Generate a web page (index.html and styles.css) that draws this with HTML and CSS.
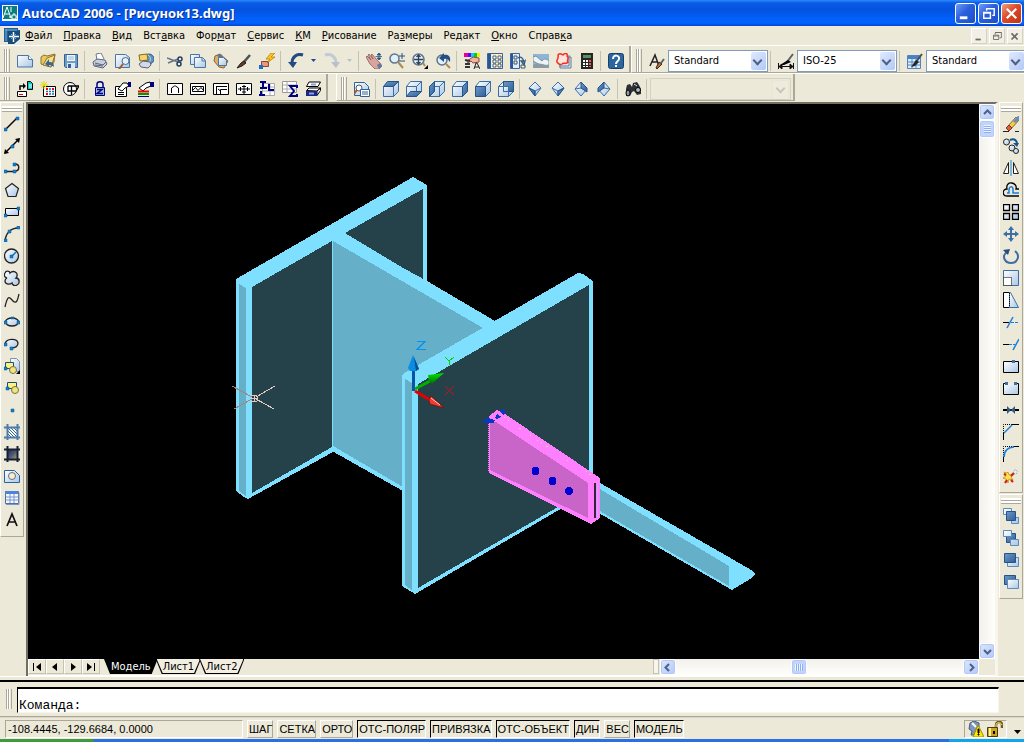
FILE: index.html
```html
<!DOCTYPE html>
<html lang="ru">
<head>
<meta charset="utf-8">
<title>AutoCAD 2006 - [Рисунок13.dwg]</title>
<link rel="stylesheet" href="styles.css">
</head>
<body>
<svg class="defs" aria-hidden="true">
  <defs>
    <linearGradient id="pale" x1="0" y1="0" x2="1" y2="1"><stop offset="0" stop-color="#fff"/><stop offset="1" stop-color="#a9c6e6"/></linearGradient>
    <linearGradient id="steel" x1="0" y1="0" x2="1" y2="1"><stop offset="0" stop-color="#6f9ac8"/><stop offset="1" stop-color="#2f5f98"/></linearGradient>
    <linearGradient id="glow" x1="0" y1="0" x2="1" y2="1"><stop offset="0" stop-color="#1c2848"/><stop offset=".5" stop-color="#4c5878"/><stop offset="1" stop-color="#c0b050"/></linearGradient>
    <linearGradient id="greenArrow" x1="0" y1="0" x2="0" y2="1"><stop offset="0" stop-color="#00e800"/><stop offset="1" stop-color="#006a00"/></linearGradient>
  </defs>
</svg>

<header class="titlebar">
  <svg class="app-icon" viewBox="0 0 16 16"><path fill="#fff" d="M0 0h16v16H0z"/><path fill="#0b7f80" d="M1 1h14v13H1z"/><path d="M1 13 5 2l4 11M3 9h4M9 2v5M7 12h8M12 8v8" fill="none" stroke="#fff"/><path d="M10 10h4v4h-4z" fill="#0b7f80" stroke="#fff"/></svg>
  <h1 class="title">AutoCAD 2006 - [Рисунок13.dwg]</h1>
  <div class="window-buttons">
    <button class="win" aria-label="Свернуть"><svg viewBox="0 0 20 20"><path fill="#fff" d="M4 13h8v3H4z"/></svg></button>
    <button class="win" aria-label="Развернуть"><svg viewBox="0 0 20 20"><path d="M8 7V5h8v7h-2M8 5h8" fill="none" stroke="#fff" stroke-width="1.500"/><path d="M5 9h7v6H5zM5 9.500h7" fill="none" stroke="#fff" stroke-width="1.500"/></svg></button>
    <button class="win win-close" aria-label="Закрыть"><svg viewBox="0 0 20 20"><path d="m5 5 10 10M15 5 5 15" stroke="#fff" stroke-width="2.400"/></svg></button>
  </div>
</header>

<nav class="menubar">
  <svg class="doc-icon" viewBox="0 0 16 16"><path fill="#1f5f98" d="M0 0h14v2h2v14H4v-2H0z"/><path d="M1 2h12M2 1v12" stroke="#7db0d8"/><path fill="#174b78" d="M4 3h12v13H4z"/><path d="M9.500 4v10M5 8.500h10" stroke="#fff" stroke-width="1.500"/><path d="m7 6 5 5M12 6l-5 5" stroke="#6fa8d4"/><path d="m10 16 6-5v5z" fill="#e4eef6"/></svg>
  <button><u>Ф</u>айл</button><button><u>П</u>равка</button><button><u>В</u>ид</button><button>Вст<u>а</u>вка</button><button>Фор<u>м</u>ат</button><button><u>С</u>ервис</button><button><u>К</u>М</button><button><u>Р</u>исование</button><button>Ра<u>з</u>меры</button><button>Ре<u>д</u>акт</button><button><u>О</u>кно</button><button>Справ<u>к</u>а</button>
  <div class="doc-buttons">
    <button aria-label="Свернуть рисунок"><svg viewBox="0 0 16 16"><path d="M4 11h6v2H4z" fill="#6b6a63"/></svg></button>
    <button aria-label="Восстановить рисунок"><svg viewBox="0 0 16 16"><path d="M6 6V4h7v6h-2M6 4h7M4 7h6v5H4zM4 8h6" fill="none" stroke="#6b6a63"/></svg></button>
    <button aria-label="Закрыть рисунок"><svg viewBox="0 0 16 16"><path d="m4 5 7 7M11 5l-7 7" stroke="#6b6a63" stroke-width="2"/></svg></button>
  </div>
</nav>

<div class="toolbar-row">
  <div class="toolbar">
    <i class="grip"></i>
    <button aria-label="Новый"><svg viewBox="0 0 16 16"><path d="M.5 2.500h11l4 4v7.500H.5z" fill="url(#pale)" stroke="#4a76a5"/><path d="M11.500 2.500v4h4" fill="#fff" stroke="#4a76a5"/></svg></button>
    <button aria-label="Открыть"><svg viewBox="0 0 16 16"><path d="m1 4 3-2 3 1 8-2-1 8-3 5L1 11z" fill="#e8c860" stroke="#92742c"/><path d="m3 12 4-7 8-3-4 12z" fill="#f6df8c" stroke="#92742c"/><path d="M14 14c0-4-2-5-5-5V6l-4 5 4 3v-2c2 0 4 1 5 2z" fill="#3b6694"/></svg></button>
    <button aria-label="Сохранить"><svg viewBox="0 0 16 16"><path d="M1.500 1.500h13v13h-12l-1-1z" fill="#6f9bc8" stroke="#355f93"/><path fill="#eef5fb" d="M4 2h8v6H4z"/><path d="M5 4h6M5 6h6" stroke="#9bb8d6"/><path fill="#dce8f4" d="M4 10h8v5H4z"/><path fill="#355f93" d="M5 11h3v4H5z"/></svg></button>
    <i class="sep"></i>
    <button aria-label="Печать"><svg viewBox="0 0 16 16"><path d="m5 7-1-6 5-1 3 6" fill="#fff" stroke="#6c7894"/><path d="m1 9 4-3 8 1 2 4-4 4-9-2z" fill="#c9cfdc" stroke="#58647e"/><path d="m3 10 8 2 3-3M3 12l8 1" fill="none" stroke="#58647e"/></svg></button>
    <button aria-label="Просмотр"><svg viewBox="0 0 16 16"><path d="M.5 1.500h10l4 3v10H.5z" fill="url(#pale)" stroke="#4a76a5"/><circle cx="10.500" cy="8" r="3.500" fill="#e2f1fc" stroke="#536a86"/><path d="m8 11-4 5" stroke="#a65b24" stroke-width="2"/></svg></button>
    <button aria-label="Публикация"><svg viewBox="0 0 16 16"><circle cx="11" cy="6" r="5" fill="#5b91c8" stroke="#315e90"/><path d="M10 2c3 2 3 5 1 8" stroke="#d4e9c4" fill="none"/><path d="m1 2 8-1 1 6-8 1z" fill="#f4d567" stroke="#866b22"/><path d="m1 11 4-3 7 1 1 3-3 3-7-1z" fill="#d4d9e4" stroke="#58647e"/></svg></button>
    <i class="sep"></i>
    <button aria-label="Вырезать"><svg viewBox="0 0 16 16"><path d="m0 5 11 4M1 10l10-4" stroke="#65758c" stroke-width="1.500"/><circle cx="13" cy="6" r="2" fill="none" stroke="#253c5f" stroke-width="1.500"/><circle cx="12" cy="11" r="2" fill="none" stroke="#253c5f" stroke-width="1.500"/></svg></button>
    <button aria-label="Копировать"><svg viewBox="0 0 16 16"><path d="M.5 1.500h9v10h-9z" fill="url(#pale)" stroke="#4a76a5"/><path d="M4.500 4.500h8l3 3v7h-11z" fill="url(#pale)" stroke="#4a76a5"/><path d="M12 5v3h3" fill="none" stroke="#4a76a5"/></svg></button>
    <button aria-label="Вставить"><svg viewBox="0 0 16 16"><path d="m2 3 5-2 8 7-4 7-5-1-5-6z" fill="#d9b065" stroke="#8a6632"/><path d="m4 2 4-1 2 3-4 1z" fill="#68748c"/><path d="M5.500 4.500h5l3 3v5h-8z" fill="url(#pale)" stroke="#4a76a5"/></svg></button>
    <button aria-label="Копирование свойств"><svg viewBox="0 0 16 16"><path d="m14 2-7 8" stroke="#4c5359" stroke-width="2.500"/><path d="m8 8 2 2-4 3-5 2 4-5z" fill="#653b23" stroke="#24201d"/></svg></button>
    <button aria-label="Редактор блоков"><svg viewBox="0 0 16 16"><path d="M2.500 8.500h7v5h-7z" fill="#e8967e" stroke="#8c4438"/><path d="m12 0-5 6h4l-3 4 8-6h-4l4-4z" fill="#ffc51c" stroke="#ad7a00" stroke-width=".7"/><path fill="#1273c4" d="M0 12h4v4H0z"/></svg></button>
    <i class="sep"></i>
    <button aria-label="Отменить"><svg viewBox="0 0 16 16"><path d="M15 2C9 0 4 4 4 10" fill="none" stroke="#234b82" stroke-width="3"/><path d="M0 9h9l-4 6z" fill="#234b82"/></svg></button>
    <button class="drop" aria-label="Список отмены"><svg viewBox="0 0 5 3"><path d="M0 0h5L2.500 3z" fill="#164a94"/></svg></button>
    <button aria-label="Повторить"><svg viewBox="0 0 16 16"><path d="M1 2c6-2 11 2 11 8" fill="none" stroke="#c3cad3" stroke-width="3"/><path d="M7 9h9l-4 6z" fill="#b7c0cb"/></svg></button>
    <button class="drop" aria-label="Список повтора"><svg viewBox="0 0 5 3"><path d="M0 0h5L2.500 3z" fill="#b7c0cb"/></svg></button>
    <i class="sep"></i>
    <button aria-label="Панорамирование"><svg viewBox="0 0 16 16"><path d="m0 4 1-1 4 4-3-5 1-1 4 5-2-4 1-1 5 6 3 3 2 3-3 3H9L4 11z" fill="#d9a49c" stroke="#8d5c57" stroke-width=".8"/><path d="m11 12 3-2 2 3-3 3z" fill="#5d7ba4"/><path d="M13 0v7M9.500 3.500h7M13 0l-2 2h4zM13 7l-2-2h4z" stroke="#2d5787" fill="#2d5787" stroke-width=".8"/></svg></button>
    <button aria-label="Зумирование"><svg viewBox="0 0 16 16"><circle cx="5.500" cy="5.500" r="4.500" fill="#e0eff8" stroke="#60748b" stroke-width="1.500"/><path d="m9 9 5 6" stroke="#b08a54" stroke-width="2"/><path d="M13 0v6M10 3h6M10 8h6" stroke="#2b5078"/></svg></button>
    <button aria-label="Показать границы"><svg viewBox="0 0 16 16"><circle cx="6.500" cy="6.500" r="5.500" fill="#eaf4fa" stroke="#60748b" stroke-width="1.500"/><path d="M2 6.500h9M6.500 2v9M4.500 4l2-2 2 2M4.500 9l2 2 2-2" fill="none" stroke="#2b4059" stroke-width="1.300"/><path d="m11 10 2 3" stroke="#b08a54" stroke-width="2"/><path d="M16 12v4h-4z"/></svg></button>
    <button aria-label="Предыдущий вид"><svg viewBox="0 0 16 16"><circle cx="7" cy="7" r="5" fill="#e0eff8" stroke="#60748b" stroke-width="1.500"/><path d="m11 11 4 4" stroke="#b08a54" stroke-width="2"/><path d="M15 9c1-6-2-8-6-7V0L4 5l5 4V6c3-1 4 0 6 3z" fill="#244f83"/></svg></button>
    <i class="sep"></i>
    <button aria-label="Свойства"><svg viewBox="0 0 16 16"><path fill="#e5009a" d="M0 0h4v4H0z"/><path fill="#6700ff" d="M4 0h3v4H4z"/><path fill="#00d6e7" d="M7 0h3v4H7z"/><path fill="#00c93d" d="M10 0h3v4h-3z"/><path fill="#f5f000" d="M13 0h3v4h-3z"/><path d="m3 8 6-4 6 1v4l-6 1-2-2-3 2z" fill="#eeb4a0" stroke="#8e493b"/><path d="m1 7 5 1M1 11h5M1 14h5" stroke="#30333a" stroke-width="2"/><path d="m10 16 2-6h1l3 6M11 14h4" fill="none" stroke="#222"/></svg></button>
    <button aria-label="Центр управления"><svg viewBox="0 0 16 16"><path d="M.5.500h15v15H.5z" fill="#f5f1cf" stroke="#3c63a0"/><path fill="#265898" d="M1 1h3v14H1z"/><path d="M6 3h3v3H6zM11 3h3v3h-3zM6 7h3v3H6zM11 7h3v3h-3zM6 11h3v3H6zM11 11h3v3h-3z" fill="#fff" stroke="#263d5c" stroke-width=".8"/></svg></button>
    <button aria-label="Инструментальные палитры"><svg viewBox="0 0 16 16"><path d="M.5.500h9v15h-9z" fill="#e2edf7" stroke="#3c63a0"/><path fill="#265898" d="M1 1h2v14H1z"/><path d="M4 3h3v3H4zM4 8h3v3H4zM11 12h4v3h-4z" fill="#fff4a9" stroke="#315784"/><path d="M8 5c3-2 5 0 6 4l1-1-1 4-3-4h2" fill="none" stroke="#315784" stroke-width="1.300"/></svg></button>
    <button aria-label="Подшивки"><svg viewBox="0 0 16 16"><path fill="#8fb5d6" d="M0 1h16v14H0z"/><path d="m0 4 3-1 6 5c2-3 5-2 7 0v4l-7 1-9-5z" fill="#eef3f5" stroke="#77909f"/><path d="M0 12c5-3 10-1 16 1v2H0z" fill="#8b9aa5"/></svg></button>
    <button aria-label="Пометки"><svg viewBox="0 0 16 16"><path d="M4 4h11v11H4z" fill="#dfe8ef" stroke="#617c9b"/><path d="M13 2v11H3" fill="none" stroke="#617c9b"/><path d="M2 2c2-3 4 0 5 0 3-3 5-1 4 1 3 3-1 4 1 6-2 3-4 0-6 2C3 13 2 10 1 9c-1-2 2-3 1-7z" fill="#ffe3dc" stroke="#f6301f" stroke-width="1.500"/></svg></button>
    <button aria-label="Калькулятор"><svg viewBox="0 0 16 16"><path fill="#222625" d="M2 0h12v16H2z"/><path fill="#5f8f5c" d="M4 2h8v3H4z"/><path d="M4 7h2v2H4zM7 7h2v2H7zM4 10h2v2H4zM7 10h2v2H7zM4 13h2v1H4zM7 13h2v1H7z" fill="#fff"/><path d="M10 7h2v2h-2zM10 10h2v2h-2zM10 13h2v1h-2z" fill="#f75648"/></svg></button>
    <i class="sep"></i>
    <button aria-label="Справка"><svg viewBox="0 0 16 16"><rect x=".5" y=".5" width="15" height="15" rx="2" fill="#2d659d" stroke="#17416b"/><path d="M5 6c0-5 7-4 6 0 0 2-3 2-3 5" fill="none" stroke="#fff" stroke-width="2"/><path fill="#fff" d="M7 12h2v2H7z"/></svg></button>
  </div>
  <div class="toolbar toolbar-open">
    <i class="grip"></i>
    <button aria-label="Текстовые стили"><svg viewBox="0 0 16 16"><path d="m1 13 5-11 4 11M3 9h6" fill="none" stroke="#222" stroke-width="1.500"/><path d="m15 6-3 4" stroke="#5c6266" stroke-width="2"/><path d="m10 9 3 2-5 5-1-1z" fill="#b36c34" stroke="#3c271b"/></svg></button>
    <span class="combo"><select aria-label="Текстовый стиль"><option>Standard</option></select></span>
    <i class="sep"></i>
    <button aria-label="Размерные стили"><svg viewBox="0 0 16 16"><path d="m15 1-6 8" stroke="#5c6266" stroke-width="2"/><path d="m10 7 3 2-7 3H2z"/><path d="M.5 10v6M15.500 10v6M1 13.500h14M4 11l-3 2.500L4 16zM12 11l3 2.500-3 2.500z" stroke="#111"/></svg></button>
    <span class="combo"><select aria-label="Размерный стиль"><option>ISO-25</option></select></span>
    <i class="sep"></i>
    <button aria-label="Стили таблиц"><svg viewBox="0 0 16 16"><path fill="#d9edff" stroke="#5584bd" d="M.5 2.500h13v13H.5z"/><path fill="#4582ca" d="M1 3h12v3H1z"/><path d="M1 9h12M1 12h12M5 6v9M9 6v9" stroke="#5584bd"/><path d="m15 1-6 8" stroke="#4c5155" stroke-width="2"/><path d="m9 7 3 2-4 4-4 1z" fill="#252525"/></svg></button>
    <span class="combo"><select aria-label="Стиль таблиц"><option>Standard</option></select></span>
  </div>
</div>

<div class="toolbar-row toolbar-row-second">
  <div class="toolbar">
    <i class="grip"></i>
    <button aria-label="Экспорт блока"><svg viewBox="0 0 16 16"><path d="M.5 10.500h9v5h-9z" fill="#fff" stroke="#000"/><path d="M2 13.500h4" stroke="red"/><path d="M3 9V5h4" fill="none" stroke="#000" stroke-width="1.500"/><path d="m6 2 3 3-3 3z"/><path d="M10.500.5h3l2 2v6h-5z" fill="#00c8c8" stroke="#000"/><path d="M12 4h3M12 6h3" stroke="#fff"/></svg></button>
    <button aria-label="Новая таблица"><svg viewBox="0 0 16 16"><path d="M3.500 5.500h12v10h-12z" fill="#fff" stroke="#000"/><path d="M6 8h2M6 13h2M12 8h2" stroke="red" stroke-width="2"/><path d="M9 8h2M6 10.500h8M9 13h5" stroke="#0878b8" stroke-width="1.500" stroke-dasharray="2 1"/><path d="M4 0v8M0 4h8M1 1l6 6M7 1 1 7" stroke="#e4d800"/></svg></button>
    <button aria-label="Сечение"><svg viewBox="0 0 16 16"><circle cx="7" cy="8" r="6.500" fill="#fff" stroke="#000"/><path d="M5 5h11M5 5v6M8.500 5v9M5 10h8l3-5" fill="none" stroke="#000" stroke-width="1.300"/></svg></button>
    <i class="sep"></i>
    <button aria-label="Блокировка"><svg viewBox="0 0 16 16"><path d="M5 7V3c0-3 6-3 6 0v4" fill="none" stroke="#000080" stroke-width="1.500"/><path fill="#9db8da" stroke="#000080" d="M3.500 6.500h9v8h-9z"/><path d="M5 8.500h5l-5 4h6" fill="none" stroke="#000080" stroke-width="1.500"/></svg></button>
    <button aria-label="Свойства блока"><svg viewBox="0 0 16 16"><path fill="#fff" stroke="#000" d="M.5 5.500h11v10H.5z"/><path d="m3 8 5-6h4l2 3-4 2-3 3z" fill="#fff" stroke="#000"/><path d="M3 11.500h6M3 13.500h6" stroke="#000"/><path fill="#000080" d="M13 1h3v5h-3z"/></svg></button>
    <button aria-label="Свойства слоя"><svg viewBox="0 0 16 16"><path d="m1 7 7-5 4-1 1 4-5 2-3 3z" fill="#fff" stroke="#000"/><path fill="#000080" d="M12 1h4v5h-4z"/><path d="M0 10.500h11" stroke="red" stroke-width="2"/><path d="M0 13h11" stroke="#009800" stroke-width="2"/><path d="M0 15.500h11" stroke="#009"/></svg></button>
    <i class="sep"></i>
    <button aria-label="Рама"><svg viewBox="0 0 16 16"><path fill="#fff" stroke="#000" d="M.5 2.500h15v11H.5z"/><path d="M4.500 12V7l3-2h1l3 2v5" fill="none" stroke="#000"/></svg></button>
    <button aria-label="Ферма"><svg viewBox="0 0 16 16"><path fill="#fff" stroke="#000" d="M.5 2.500h15v11H.5z"/><path d="M2.500 5.500h11v5h-11zm0 4 3-3 2.500 3 3-3 2.500 3" fill="none" stroke="#000"/></svg></button>
    <button aria-label="Узел рамы"><svg viewBox="0 0 16 16"><path fill="#fff" stroke="#000" d="M.5 2.500h15v11H.5z"/><path d="M3 5.500h11M3.500 5v8M7.500 13V8.500H14M5 8l2.500 2" fill="none" stroke="#000"/></svg></button>
    <button aria-label="Узел"><svg viewBox="0 0 16 16"><path fill="#fff" stroke="#000" d="M.5 2.500h15v11H.5z"/><path d="M2 8h12M8 4v9M6 5.500h4M6 11h4M4.500 6v4M11.500 6v4" stroke="#000"/></svg></button>
    <button aria-label="Таблица профилей"><svg viewBox="0 0 16 16"><path fill="#fff" stroke="#aaa" d="M3.500 2.500h12v12h-12z"/><path d="M4 6h12M4 10h12M11 3v12" stroke="#aaa"/><path d="M1 1h6M4 1v5M1 7h7M10 3v6M9 9h6M2 10v5M0 14h6" fill="none" stroke="#000080" stroke-width="2"/></svg></button>
    <button aria-label="Итоги"><svg viewBox="0 0 16 16"><path fill="#fff" stroke="#999" d="M.5.500h14v11H.5z"/><path d="M1 4h13M1 8h13M5 1v10" stroke="#aaa"/><path d="M15 7V5H8l4 5-4 5h7v-2" fill="none" stroke="#000080" stroke-width="2"/></svg></button>
    <button aria-label="Архив"><svg viewBox="0 0 16 16"><path d="M1.500 5.500 4 1h11.500L13 5.500zM1.500 9.500 4 7h11.500L12 10zM12 14.500l3.500-5V7L12 10z" fill="#fff" stroke="#000"/><path d="M1 10h11v5H1z" fill="#1b268d"/><path d="M4 12.500h5M6 3.500h5" stroke="#8fa3d8" stroke-width="2"/></svg></button>
  </div>
  <div class="toolbar toolbar-views">
    <i class="grip"></i>
    <button aria-label="Именованные виды"><svg viewBox="0 0 16 16"><path d="M.5 1.500h10l4 4v9H.5z" fill="url(#pale)" stroke="#2e6299"/><circle cx="5" cy="7" r="3" fill="#fff" stroke="#556"/><path d="m3 9-3 4" stroke="#a65b24" stroke-width="2"/><path fill="#fff" stroke="#2e6299" d="M6.500 8.500h9v7h-9z"/><path d="M8 11h6M8 13h6" stroke="#2e6299"/></svg></button>
    <i class="sep"></i>
    <button aria-label="Вид сверху"><svg class="cube" viewBox="0 0 16 16"><path d="M.5 5.500h10v10H.5zM10.500 5.500l5-5v10l-5 5z"/><path class="face" d="m.5 5.500 4-5h11l-5 5z"/></svg></button>
    <button aria-label="Вид снизу"><svg class="cube" viewBox="0 0 16 16"><path d="M.5 5.500h10v10H.5zM.5 5.500l4-5h11l-5 5M10.500 5.500l5-5v10l-5 5z"/><path class="face" d="m.5 15.500 4-5h11l-5 5z"/></svg></button>
    <button aria-label="Вид слева"><svg class="cube" viewBox="0 0 16 16"><path d="M.5 5.500h10v10H.5zM.5 5.500l5-5h10l-5 5M10.500 5.500l5-5v10l-5 5z"/><path class="face" d="m.5 5.500 5-5v10l-5 5z"/></svg></button>
    <button aria-label="Вид справа"><svg class="cube" viewBox="0 0 16 16"><path d="M.5 5.500h10v10H.5zM.5 5.500l4-5h11l-5 5"/><path class="face" d="m10.500 5.500 5-5v10l-5 5z"/></svg></button>
    <button aria-label="Вид спереди"><svg class="cube" viewBox="0 0 16 16"><path d="m.5 5.500 4-5h11l-5 5M10.500 5.500l5-5v10l-5 5z"/><path class="face" d="M.5 5.500h10v10H.5z"/></svg></button>
    <button aria-label="Вид сзади"><svg class="cube" viewBox="0 0 16 16"><path d="M.5 5.500h10v10H.5zM.5 5.500l5-5h10l-5 5M10.500 5.500l5-5v10l-5 5z"/><path class="face" d="M5.500.5h10v10h-10z"/><path d="M5.500 5.500h5v5h-5z"/></svg></button>
    <i class="sep"></i>
    <button aria-label="ЮЗ изометрия"><svg class="cube" viewBox="0 0 16 16"><path d="m8 1 6 6-6 8-6-8z"/><path d="m8 1 6 6-6 3-6-3zM8 10v5"/><path class="face" d="m2 7 6 3v5z"/></svg></button>
    <button aria-label="ЮВ изометрия"><svg class="cube" viewBox="0 0 16 16"><path d="m8 1 6 6-6 8-6-8z"/><path d="m8 1 6 6-6 3-6-3zM8 10v5"/><path class="face" d="m8 10 6-3-6 8z"/></svg></button>
    <button aria-label="СВ изометрия"><svg class="cube" viewBox="0 0 16 16"><path d="m8 1 6 7-6 7-6-7zM8 7l6 3M8 7 2 8"/><path class="face" d="m8 1 6 6v4L8 7z"/></svg></button>
    <button aria-label="СЗ изометрия"><svg class="cube" viewBox="0 0 16 16"><path d="m8 1 6 7-6 7-6-7zM8 7l6 1"/><path class="face" d="M8 1 2 7v4l6-4z"/></svg></button>
    <i class="sep"></i>
    <button aria-label="Камера"><svg viewBox="0 0 16 16"><path d="m2 4 3-1 2 3 1-4 4-1 2 3 2 4v5l-4 1-3-4-2 1-2 4H1V8z" fill="#2c3034"/><circle cx="13" cy="9" r="2.500" fill="#adb8c2" stroke="#000"/><ellipse cx="3" cy="12" rx="2" ry="3" fill="#8d98a2" stroke="#000"/><path d="m9 3 3 2" stroke="#d4dce4"/></svg></button>
    <i class="sep"></i>
    <span class="combo combo-view"><select aria-label="Видовой экран" disabled><option></option></select></span>
  </div>
</div>

<main class="workspace">
  <aside class="dock">
    <div class="palette">
      <i class="grip grip-flat"></i>
      <button aria-label="Отрезок"><svg viewBox="0 0 16 16"><path d="M2 13 13 2" stroke="#000" stroke-width="1.500"/><path class="node" d="M0 12h3v3H0zM12 1h3v3h-3z"/></svg></button>
      <button aria-label="Прямая"><svg viewBox="0 0 16 16"><path d="M1 15 15 1" stroke="#000" stroke-width="1.500"/><path d="m0 16 1-5 4 4zM16 0l-5 1 4 4z"/><path class="node" d="M7 7h3v3H7z"/></svg></button>
      <button aria-label="Полилиния"><svg viewBox="0 0 16 16"><path d="M2 11.500h9M11 4c5 0 5 7 0 7" fill="none" stroke="#222" stroke-width="1.500"/><path class="node" d="M0 10h3v3H0zM9 10h3v3H9zM9 3h3v3H9z"/></svg></button>
      <button aria-label="Многоугольник"><svg viewBox="0 0 16 16"><path d="m8 1.500 6.500 5-2.500 8H4l-2.500-8z" fill="url(#pale)" stroke="#222" stroke-width="1.200"/></svg></button>
      <button aria-label="Прямоугольник"><svg viewBox="0 0 16 16"><path d="M1.500 4.500h13v7h-13z" fill="url(#pale)" stroke="#000"/><path class="node" d="M0 10h3v3H0zM13 3h3v3h-3z"/></svg></button>
      <button aria-label="Дуга"><svg viewBox="0 0 16 16"><path d="M1 14C2 7 7 2 14 2" fill="none" stroke="#222" stroke-width="1.300"/><path class="node" d="M0 13h3v3H0zM4 4h3v3H4zM13 0h3v3h-3z"/></svg></button>
      <button aria-label="Круг"><svg viewBox="0 0 16 16"><circle cx="7.500" cy="8" r="7" fill="url(#pale)" stroke="#222" stroke-width="1.300"/><path d="m8 8 4-4" stroke="#1573b9" stroke-width="1.500"/><path class="node" d="M6 7h3v3H6z"/></svg></button>
      <button aria-label="Облако"><svg viewBox="0 0 16 16"><path d="M1 3c1-3 5-2 5 0 3-3 8-1 7 3 0 1-1 2-1 2 4 0 4 6 1 7-3 2-5-1-5-2-3 2-7 1-7-2 0-2 2-3 2-3C2 8-1 6 1 3z" fill="url(#pale)" stroke="#222" stroke-width="1.300"/></svg></button>
      <button aria-label="Сплайн"><svg viewBox="0 0 16 16"><path d="M1 15C4 1 6 6 9 9c4 4 5-3 6-7" fill="none" stroke="#222" stroke-width="1.300"/></svg></button>
      <button aria-label="Эллипс"><svg viewBox="0 0 16 16"><ellipse cx="8" cy="8" rx="6.500" ry="4" fill="url(#pale)" stroke="#222" stroke-width="1.300"/><path class="node" d="M0 7h3v3H0zM7 3h3v2H7zM13 7h3v3h-3z"/></svg></button>
      <button aria-label="Эллиптическая дуга"><svg viewBox="0 0 16 16"><path d="M1 8c1-6 12-6 13-1 0 4-4 5-7 5" fill="url(#pale)" stroke="#222" stroke-width="1.300"/><path class="node" d="M0 7h3v3H0zM6 11h3v3H6z"/></svg></button>
      <button aria-label="Вставить блок"><svg viewBox="0 0 16 16"><path d="M6.500.5h6l3 3v10h-9z" fill="url(#pale)" stroke="#7794b6"/><path d="M1.500 4.500h8v6h-8z" fill="#fff37c" stroke="#174e82"/><circle cx="9" cy="12" r="3.500" fill="#f0e57b" stroke="#74714c"/><path class="node" d="M0 9h3v3H0z"/><path d="M16 12v4h-4z"/></svg></button>
      <button aria-label="Создать блок"><svg viewBox="0 0 16 16"><path d="M3.500 2.500h9v6h-9z" fill="#fff37c" stroke="#174e82"/><circle cx="11" cy="10" r="3.500" fill="#f0e57b" stroke="#74714c"/><path class="node" d="M2 7h3v3H2z"/></svg></button>
      <button aria-label="Точка"><svg viewBox="0 0 16 16"><path class="node" d="M7 7h3v3H7z"/></svg></button>
      <button aria-label="Штриховка"><svg viewBox="0 0 16 16"><path fill="#fff" d="M4 4h9v9H4z"/><path d="m4 4 9 9M4 7l6 6M4 10l3 3M7 4l6 6M10 4l3 3" stroke="#32638d"/><path d="M0 3.500h16M0 13.500h16M3.500 0v16M13.500 0v16" stroke="#4c7da9" stroke-width="2"/></svg></button>
      <button aria-label="Градиент"><svg viewBox="0 0 16 16"><path fill="url(#glow)" d="M3 3h11v11H3z"/><path d="M0 3.500h16M0 13.500h16M3.500 0v16M13.500 0v16" stroke="#172135" stroke-width="2"/></svg></button>
      <button aria-label="Область"><svg viewBox="0 0 16 16"><path d="M.5 2.500h10l5 5v7H.5z" fill="url(#pale)" stroke="#28639b"/><circle cx="8" cy="8" r="3.500" fill="#f5ecd9" stroke="#6a6e71"/></svg></button>
      <button aria-label="Таблица"><svg viewBox="0 0 16 16"><path fill="#f3f8ff" stroke="#526fa8" d="M1.500 1.500h13v12h-13z"/><path fill="#4f82db" d="M1 1h13v3H1z"/><path d="M2 7h12M2 10h12M6 4v9M10 4v9M2 14.500h13v-12" fill="none" stroke="#7895ca"/></svg></button>
      <button aria-label="Многострочный текст"><svg viewBox="0 0 16 16"><path d="m3 14 5-12 5 12M5 10h6" fill="none" stroke="#111" stroke-width="1.700"/></svg></button>
    </div>
  </aside>

  <section class="drawing">
    <div class="view">
      <svg class="model" viewBox="28 104 951 555" role="img" aria-label="Трёхмерная модель узла">
        <g class="solid">
          <path class="lit" d="M236 279 413 177l14 8v100h-94v167l-85 47-4-2-8-6z"/>
          <path class="mid" d="m239 284 7 4v208l-7-5z"/>
          <path class="dark" d="m252 287 80-46v206l-80 46zM345 233l78-44v91z"/>
          <path class="lit" d="m332 229 95 52 68 40v20l-92 60v90l-71-40z"/>
          <path class="mid" d="m333 241 150 87-80 46v113l-70-41z"/>
          <path class="lit" d="m402 375 4-3 172-99 5 1 10 7v209l-178 104-13-8z"/>
          <path class="mid" d="m405 379 7 4v207l-7-5z"/>
          <path class="dark" d="m418 384 171-99v204l-171 99z"/>
          <path class="lit" d="m597 482 3 1 153 88 2 3-3 4-20 12-135-78z"/>
          <path class="mid" d="m598 488 131 78v20l-131-76z"/>
          <path class="plate" d="m489 416 8-6 8 4 95 64v40l-9 6-102-51z"/>
          <path class="plate-face" d="M490 422h6l92 61v35l-98-48z"/>
          <path d="M594 483h2v35h-2z" fill="#3a2038"/>
          <path d="M597.500 484v34" stroke="#7fdfff" stroke-dasharray="1 1"/>
          <path d="M488.500 424v48" stroke="#ff80ff" stroke-dasharray="1 1"/>
          <path d="M504 417h1M508 420h1M519 428h2M530 435h1M537 440h1M541 442h1M546 446h2M567 460h1M586 471h1M589 474h2" stroke="#e6e07a"/>
          <path d="m482 421 6-3 7 2-1 3h-8zM499 411l4-2 3 4-3 2zM495 418l2-4 2 2 3 1-4 1-1 2z" fill="#0838c8"/>
          <circle cx="535.500" cy="471" r="4" fill="#0000d0"/><circle cx="552.500" cy="481" r="4" fill="#0000d0"/><circle cx="569" cy="491" r="4" fill="#0000d0"/>
        </g>
        <path d="M412 369h3v22h-3z" fill="#0952a4"/><path d="m413 355 6 14-3 2h-6l-2-3z" fill="#0a8be4"/><path d="m414 357 5 12-3 2z" fill="#07508e"/>
        <path d="m415 389 15-8" stroke="#00b000" stroke-width="3"/><path d="m428 375 16-2-9 8-3 3-3-3z" fill="url(#greenArrow)"/>
        <path d="m415 391 15 9" stroke="#e80000" stroke-width="3"/><path d="m431 396 13 12-14-4-1-4z" fill="#e83f32" stroke="#8c0000" stroke-width=".7"/><path d="m431 398 9 7" stroke="#ffc4b9"/>
        <g class="solid thin"><path d="M417 341.500h8l-8 8h9" stroke="#0892ef"/><path d="m445 357 4 4 5-4M449 361v4" stroke="#00d400"/><path d="m445 386 9 9M454 386l-9 9" stroke="#d01010"/>
          <path d="m232 386 20 11M234 409l18-10" stroke="#b07e72"/><path d="m256 397 19-11M256 399l18 10M251 395.500h6M251 401.500h6M254 396v5M257 396v5M252 398.500h6" stroke="#e2cac2"/></g>
      </svg>
      <div class="scroll scroll-v">
        <button aria-label="Вверх"><svg viewBox="0 0 9 9"><path d="m1 6 3.500-3.500L8 6"/></svg></button>
        <div class="thumb"></div>
        <button class="last" aria-label="Вниз"><svg viewBox="0 0 9 9"><path d="m1 3 3.500 3.500L8 3"/></svg></button>
      </div>
    </div>
    <div class="sheetbar">
      <button class="step" aria-label="Первый лист"><svg viewBox="0 0 10 10"><path d="M1 1h1v8H1zM9 1v8L4 5z"/></svg></button>
      <button class="step" aria-label="Предыдущий лист"><svg viewBox="0 0 10 10"><path d="M7 1v8L2 5z"/></svg></button>
      <button class="step" aria-label="Следующий лист"><svg viewBox="0 0 10 10"><path d="m3 1 5 4-5 4z"/></svg></button>
      <button class="step" aria-label="Последний лист"><svg viewBox="0 0 10 10"><path d="M8 1h1v8H8zM1 1l5 4-5 4z"/></svg></button>
      <div class="tabs">
        <button class="tab tab-on"><span>Модель</span></button>
        <button class="tab"><span>Лист1</span></button>
        <button class="tab"><span>Лист2</span></button>
      </div>
      <i class="splitter"></i>
      <div class="scroll scroll-h">
        <button aria-label="Влево"><svg viewBox="0 0 9 9"><path d="M6 1 2.500 4.500 6 8"/></svg></button>
        <div class="thumb"></div>
        <button class="last" aria-label="Вправо"><svg viewBox="0 0 9 9"><path d="m3 1 3.500 3.500L3 8"/></svg></button>
      </div>
      <i class="corner"></i>
    </div>
  </section>

  <aside class="dock dock-right">
    <div class="palette">
      <i class="grip grip-flat"></i>
      <button aria-label="Стереть"><svg viewBox="0 0 16 16"><path d="M0 15.500h6M12 15.500h4" stroke="#222"/><path d="m5 10 8-9 3 3-8 9z" fill="#f5cc45" stroke="#826e3b"/><path d="m10 5 5-5h1v4l-4 3z" fill="#668fbc"/><path d="m3 12 3-3 3 3-3 3z" fill="#e15b42" stroke="#75352b"/></svg></button>
      <button aria-label="Копировать объекты"><svg viewBox="0 0 16 16"><circle cx="3.500" cy="4" r="3" fill="url(#pale)" stroke="#222"/><circle cx="9" cy="10" r="3" fill="url(#pale)" stroke="#222"/><circle cx="13" cy="13" r="2.500" fill="url(#pale)" stroke="#222"/><path d="M7 2c5-2 7 1 7 4" fill="none" stroke="#17558e" stroke-width="2"/><path d="M10 5h6l-2 4z" fill="#17558e"/></svg></button>
      <button aria-label="Зеркало"><svg viewBox="0 0 16 16"><path d="M.5 13.500h5v-11zM15.500 13.500h-5v-11z" fill="#fff" stroke="#222"/><path d="M8 0v16" stroke="#168bd8"/></svg></button>
      <button aria-label="Подобие"><svg viewBox="0 0 16 16"><path d="M16 7h-3c2-7-11-9-9 0-5 0-5 7 0 7h12" fill="none" stroke="#000" stroke-width="1.300"/><path d="M16 11h-6V7c0-3-4-3-4 1v3H4" fill="none" stroke="#1780d8" stroke-width="1.500"/></svg></button>
      <button aria-label="Массив"><svg viewBox="0 0 16 16"><path d="M.5.5h6v6h-6zM9.500.5h6v6h-6zM.5 9.500h6v6h-6zM9.500 9.500h6v6h-6z" fill="url(#pale)" stroke="#000" stroke-width="1.300"/></svg></button>
      <button aria-label="Перенести"><svg viewBox="0 0 16 16"><path d="M8 2v12M2 8h12" stroke="#3c6fa3" stroke-width="2"/><path d="m8 0 3 4H5zM8 16l3-4H5zM0 8l4-3v6zM16 8l-4-3v6z" fill="#3c6fa3"/></svg></button>
      <button aria-label="Повернуть"><svg viewBox="0 0 16 16"><path d="M12 3c6 5 2 12-4 12C2 15-2 8 4 4" fill="none" stroke="#3c6fa3" stroke-width="2"/><path d="m0 2 7-1-2 6z" fill="#254f7b"/></svg></button>
      <button aria-label="Масштаб"><svg viewBox="0 0 16 16"><path d="M.5.5h15v15H.5z" fill="url(#pale)" stroke="#3c6fa3"/><path d="M.5 7.500h8v8h-8z" fill="#fff" stroke="#000" stroke-dasharray="1 1"/></svg></button>
      <button aria-label="Растянуть"><svg viewBox="0 0 16 16"><path d="M.5.5h6v15h-6z" fill="#fff" stroke="#000"/><path d="M6.500.5h1l8 15h-9z" fill="url(#pale)" stroke="#3c6fa3"/><path d="M6.500 1v14" stroke="#000" stroke-dasharray="1 1"/></svg></button>
      <button aria-label="Обрезать"><svg viewBox="0 0 16 16"><path d="M0 8.500h6" stroke="#000"/><path d="M8 8.500h8" stroke="#1780d8" stroke-dasharray="3 1"/><path d="M4 14 10 3" stroke="#1780d8" stroke-width="1.500"/></svg></button>
      <button aria-label="Удлинить"><svg viewBox="0 0 16 16"><path d="M0 8.500h6" stroke="#000"/><path d="M6 8.500h6" stroke="#1780d8" stroke-dasharray="3 1"/><path d="m10 14 6-11" stroke="#1780d8" stroke-width="1.500"/></svg></button>
      <button aria-label="Разорвать в точке"><svg viewBox="0 0 16 16"><path d="M.5 3.500h15v11H.5z" fill="url(#pale)" stroke="#000"/><path fill="#3c6fa3" d="M9 2h3v3H9z"/></svg></button>
      <button aria-label="Разорвать"><svg viewBox="0 0 16 16"><path d="M.5 3.500h15v11H.5z" fill="url(#pale)"/><path d="M3 3.500H.5v11h15v-11H13" fill="none" stroke="#000"/><path fill="#3c6fa3" d="M2 2h3v3H2zM11 2h3v3h-3z"/></svg></button>
      <button aria-label="Соединить"><svg viewBox="0 0 16 16"><path d="M0 8h16" stroke="#000" stroke-width="2"/><path d="m4 4 4 4-4 4zM12 4 8 8l4 4z" fill="#315c80"/></svg></button>
      <button aria-label="Фаска"><svg viewBox="0 0 16 16"><path d="M.5 16V9M8 .5h8" stroke="#000"/><path d="M.5 9V.5H8" fill="none" stroke="#000" stroke-dasharray="1 1"/><path d="m1 9 8-8" stroke="#1780d8" stroke-width="1.500"/></svg></button>
      <button aria-label="Сопряжение"><svg viewBox="0 0 16 16"><path d="M.5 16v-5M10 .5h6" stroke="#000"/><path d="M.5 11V.5H10" fill="none" stroke="#000" stroke-dasharray="1 1"/><path d="M1 11c0-6 4-10 10-10" fill="none" stroke="#1780d8" stroke-width="1.700"/></svg></button>
      <button aria-label="Расчленить"><svg viewBox="0 0 16 16"><path d="m5 4 1 3 4-1-2 3 2 3-4-1-1 4-2-4-3-1 3-2-2-4 3 1z" fill="#ffe04a" stroke="#b8860b" stroke-width=".7"/><path d="m2 15 2-3M8 8l3-3M1 6l2 1M8 12l2 2" stroke="#d51b0e" stroke-width="2.200"/><path d="m10 5 2-4 3 3M11 6l4-1" stroke="#79a9cc" stroke-dasharray="1 1" fill="none"/></svg></button>
    </div>
    <div class="palette">
      <i class="grip grip-flat"></i>
      <button aria-label="На передний план"><svg class="order" viewBox="0 0 16 16"><path d="M.5.500h8v6h-8zM8.500 9.500h7v6h-7z"/><path class="face" d="M3.500 3.500h9v9h-9z"/></svg></button>
      <button aria-label="На задний план"><svg class="order" viewBox="0 0 16 16"><path class="face" d="M3.500 3.500h9v9h-9z"/><path d="M.5.500h8v6h-8zM7.500 9.500h8v6h-8z"/></svg></button>
      <button aria-label="Поверх объекта"><svg class="order" viewBox="0 0 16 16"><path d="M4.500 5.500h11v9h-11z"/><path class="face" d="M1.500 1.500h11v9h-11z"/></svg></button>
      <button aria-label="Под объектом"><svg class="order" viewBox="0 0 16 16"><path class="face" d="M1.500 1.500h11v9h-11z"/><path d="M4.500 5.500h11v9h-11z"/></svg></button>
    </div>
  </aside>
</main>

<section class="command">
  <i class="grip"></i>
  <input type="text" aria-label="Командная строка" value="Команда:">
</section>

<footer class="status">
  <output class="coords">-108.4445, -129.6684, 0.0000</output>
  <button class="mode">ШАГ</button><button class="mode">СЕТКА</button><button class="mode">ОРТО</button><button class="mode on">ОТС-ПОЛЯР</button><button class="mode on">ПРИВЯЗКА</button><button class="mode on">ОТС-ОБЪЕКТ</button><button class="mode on">ДИН</button><button class="mode">ВЕС</button><button class="mode on">МОДЕЛЬ</button>
  <div class="tray">
    <svg viewBox="0 0 16 16"><path d="m2 2 4-2 5 2v4l-3 3 2 5H3l1-4-3-2z" fill="#7d98bb" stroke="#445a7b"/><path d="m4 2 4 4" stroke="#fff" stroke-width="2"/><path d="m10 4 6 12H5z" fill="#ffe900" stroke="#9e8b00"/><path d="M10 8h1v4h-1zM10 13h1v1h-1z" stroke="#000"/></svg>
    <svg viewBox="0 0 16 16"><path d="M9 8V4c0-4 6-4 6 0v3" fill="none" stroke="#725c18" stroke-width="2.500"/><path d="M9 8V4c0-3 5-3 6 0" fill="none" stroke="#ffe36a"/><path fill="#cda21c" stroke="#4d3b0b" d="M.5 6.500h10v9H.5z"/><path d="M3 7v8" stroke="#fff1a0" stroke-width="2"/><path d="M6 10h2v3H6z"/></svg>
  </div>
  <button class="tray-menu" aria-label="Меню строки состояния"><svg viewBox="0 0 7 4"><path d="M0 0h7L3.500 4z"/></svg></button>
</footer>
<div class="taskbar"><i class="start"></i><i class="clock"></i></div>
</body>
</html>
```
FILE: styles.css
```css
* { box-sizing: border-box; }

:root {
  --face: #ece9d8;
  --shade: #aca899;
  --ui: "DejaVu Sans Condensed", "Noto Sans", sans-serif;
}

body {
  margin: 0;
  height: 100vh;
  display: flex;
  flex-direction: column;
  overflow: hidden;
  background: var(--face);
  color: #000;
  font: 11px/14px var(--ui);
}

button {
  display: flex;
  align-items: center;
  justify-content: center;
  flex: none;
  margin: 0;
  padding: 0;
  border: 0;
  background: none;
  color: inherit;
  font: inherit;
}

svg { display: block; flex: none; }
.defs { position: absolute; width: 0; height: 0; }

/* Title bar */
.titlebar {
  display: flex;
  align-items: center;
  flex: none;
  height: 26px;
  padding: 0 2px;
  gap: 4px;
  background: linear-gradient(#2a8bff 0, #0a5be6 3px, #0353e0 10px, #0260fb 19px, #0262ff 23px, #0143cf 26px);
}
.app-icon { width: 16px; height: 16px; }
.title {
  flex: 1;
  margin: 0;
  color: #fff;
  font: bold 13px/18px "Noto Sans", sans-serif;
  text-shadow: 1px 1px #0a2f86;
  white-space: nowrap;
}
.window-buttons { display: flex; gap: 2px; }
.win {
  width: 21px;
  height: 21px;
  border: 1px solid #fff;
  border-radius: 3px;
  background: linear-gradient(135deg, #6f9bf5, #2a5fdc 45%, #1d4fc6);
}
.win svg { width: 19px; height: 19px; }
.win-close { background: linear-gradient(135deg, #f0a080, #dd4a28 45%, #c03412); }

/* Menu bar */
.menubar {
  display: flex;
  align-items: center;
  flex: none;
  height: 19px;
  padding-left: 4px;
}
.menubar > button { padding: 0 6px 0 5px; height: 18px; white-space: nowrap; }
.doc-icon { width: 16px; height: 16px; }
.doc-buttons { display: flex; gap: 2px; margin-left: auto; padding-right: 1px; }
.doc-buttons button { width: 16px; height: 16px; border: 1px solid; border-color: #fff #d6d2c2 #d6d2c2 #fff; background: #f2f0e6; }
.doc-buttons svg { width: 14px; height: 14px; }

/* Horizontal toolbars */
.toolbar-row {
  display: flex;
  flex: none;
  height: 28px;
  overflow: hidden;
  border-top: 1px solid #fff;
}
.toolbar {
  display: flex;
  align-items: center;
  flex: none;
  padding: 3px 2px 0 4px;
  border-right: 2px solid var(--shade);
  border-bottom: 1px solid var(--shade);
}
.toolbar-open { flex: 1; border-right: 0; border-left: 1px solid #fff; }
.toolbar-row-second { height: 28px; }
.toolbar-row-second .toolbar + .toolbar { margin-left: 8px; border-left: 1px solid #fff; }
.toolbar button { width: 23px; height: 22px; }
.toolbar button svg { width: 16px; height: 16px; }
.toolbar .drop { width: 13px; }
.toolbar .drop svg { width: 5px; height: 3px; }
.grip {
  flex: none;
  width: 6px;
  height: 23px;
  margin-right: 3px;
  border: solid;
  border-width: 0 1px;
  border-color: #fff var(--shade);
  background: linear-gradient(90deg, #fff 0 1px, var(--shade) 1px 2px, #fff 2px 3px, var(--face) 3px);
}
.sep { flex: none; width: 1px; height: 20px; margin: 0 3px 0 2px; background: #c5c2b2; }
.cube { fill: url(#pale); stroke: #3a6ea5; }
.cube .face, .order .face { fill: url(#steel); stroke: #24538a; }
.order { fill: url(#pale); stroke: #5d8bbb; }

.combo { position: relative; display: flex; flex: none; width: 100px; height: 22px; }
.combo select {
  width: 100%;
  appearance: none;
  margin: 0;
  padding: 0 18px 0 5px;
  border: 1px solid #7f9db9;
  border-radius: 0;
  background: #fff;
  color: #000;
  font: 11px/16px var(--ui);
}
.combo::before {
  content: "";
  position: absolute;
  top: 2px;
  right: 2px;
  width: 15px;
  height: 18px;
  border-radius: 2px;
  background: linear-gradient(135deg, #e1eafe, #b1c8f6);
  pointer-events: none;
}
.combo::after {
  content: "";
  position: absolute;
  top: 7px;
  right: 7px;
  width: 5px;
  height: 5px;
  border: solid #4d6185;
  border-width: 0 2px 2px 0;
  transform: rotate(45deg);
  pointer-events: none;
}
.combo-view { width: 141px; }
.combo-view select { border-color: #c9c7ba; background: var(--face); }
.combo-view::before { background: #f5f3ea; border: 1px solid #e4e1d2; }
.combo-view::after { border-color: #c9c7ba; }

/* Work area */
.workspace { display: flex; flex: 1; min-height: 0; padding-top: 1px; border-bottom: 1px solid #fff; }
.dock { flex: none; width: 26px; }
.dock-right { padding-left: 1px; }
.palette {
  display: flex;
  flex-direction: column;
  align-items: center;
  width: 24px;
  padding: 3px 0 5px;
  margin-bottom: 1px;
  border: 1px solid;
  border-color: #fff var(--shade) var(--shade) #fff;
}
.palette button { width: 22px; height: 22px; }
.palette svg { width: 16px; height: 16px; }
.grip-flat {
  width: 20px;
  height: 6px;
  margin: 0 0 1px;
  border: 0;
  background: linear-gradient(#fff 0 2px, var(--shade) 2px 3px, #fff 3px 5px, var(--shade) 5px);
}
.node { fill: #0f80d6; stroke: #0a568f; stroke-width: 0.5; }

.drawing {
  display: flex;
  flex-direction: column;
  flex: 1;
  min-width: 0;
  border: solid #716f64;
  border-width: 2px 0 0 2px;
  border-right: 3px solid #f7f5ec;
}
.view { display: flex; flex: 1; min-height: 0; background: #000; }
.model { flex: 1; width: 0; min-width: 0; height: 100%; }
.solid { shape-rendering: crispEdges; }
.thin { fill: none; }
.lit { fill: #7fdfff; }
.mid { fill: #65afc8; }
.dark { fill: #25414a; }
.plate { fill: #ff80ff; }
.plate-face { fill: #c964c9; }

.scroll { display: flex; flex: none; }
.scroll button, .thumb {
  width: 16px;
  height: 16px;
  flex: none;
  border: 1px solid #fff;
  border-radius: 3px;
  background: linear-gradient(135deg, #dbe6fe, #b2c9f8);
  box-shadow: inset 0 0 0 1px #b4c8f4;
}
.scroll svg { width: 9px; height: 9px; fill: none; stroke: #4d6185; stroke-width: 2; }
.scroll .last { margin: auto 0 0 auto; }
.scroll-v { flex-direction: column; width: 16px; background: linear-gradient(90deg, #f3f1ec, #fefefb); }
.scroll-v .thumb { height: 18px; background: repeating-linear-gradient(#eef4fe 0 1px, #8cb0f8 1px 2px) center / 7px 8px no-repeat, #c2d4fc; }
.scroll-h { flex: 0 0 33%; height: 16px; background: linear-gradient(#f3f1ec, #fefefb); }
.scroll-h .thumb { margin-left: 36%; background: repeating-linear-gradient(90deg, #eef4fe 0 1px, #8cb0f8 1px 2px) center / 8px 7px no-repeat, #c2d4fc; }

.sheetbar { display: flex; flex: none; height: 17px; border-bottom: 1px solid #fff; }
.step { width: 18px; height: 15px; border: 1px solid; border-color: #fff #c5c2b2 #c5c2b2 #fff; }
.step svg { width: 10px; height: 10px; }
.tabs { display: flex; flex: 1; padding-left: 4px; }
.tab { position: relative; height: 15px; padding: 0 7px; margin-right: -2px; background: #000; clip-path: polygon(0 0, 100% 0, calc(100% - 6px) 100%, 6px 100%); }
.tab::before { content: ""; position: absolute; inset: 0 1px 1px; background: #f2efe2; clip-path: polygon(0 0, 100% 0, calc(100% - 6px) 100%, 6px 100%); }
.tab span { position: relative; }
.tab-on { color: #fff; }
.tab-on::before { background: #000; }
.splitter { width: 6px; height: 15px; border: 1px solid #c5c2b2; margin-right: 1px; background: #f7f5ec; }
.corner { width: 16px; }

/* Command line */
.command {
  display: flex;
  flex: none;
  margin-top: 3px;
  padding: 5px 25px 3px 6px;
  border-top: 2px solid #000;
  border-bottom: 1px solid var(--shade);
}
.command .grip { height: 20px; margin: 2px 5px 0 0; }
.command input {
  flex: 1;
  min-width: 0;
  height: 26px;
  padding: 10px 0 0 1px;
  border: solid;
  border-width: 2px 1px 1px 1px;
  border-color: #000 #f7f5ec #f7f5ec #000;
  border-radius: 0;
  background: #fff;
  color: #000;
  font: 13px/14px "Liberation Mono", monospace;
}

/* Status bar */
.status {
  display: flex;
  align-items: center;
  flex: none;
  gap: 4px;
  height: 22px;
  padding-left: 5px;
  border-top: 1px solid #d9d6c8;
  font: 11px/14px "Liberation Sans", sans-serif;
}
.coords, .mode { height: 18px; border: 1px solid; border-color: #fff var(--shade) var(--shade) #fff; white-space: nowrap; }
.coords { width: 238px; padding: 0 2px; border-color: var(--shade) #fff #fff var(--shade); line-height: 16px; }
.mode { padding: 0 0 0 1px; }
.on { border-color: #000 #fff #fff #000; padding-top: 1px; }
.tray { display: flex; align-items: center; gap: 3px; margin-left: auto; height: 18px; padding: 0 3px; border: 1px solid; border-color: var(--shade) #fff #fff var(--shade); }
.tray svg { width: 16px; height: 16px; }
.tray-menu { width: 13px; height: 18px; padding-top: 6px; }
.tray-menu svg { width: 7px; height: 4px; }

.taskbar { display: flex; justify-content: space-between; flex: none; height: 3px; background: #2a6fe4; }
.start { width: 94px; background: #3f9a3f; border-radius: 0 3px 0 0; }
.clock { width: 75px; background: #12a5ee; }
```
